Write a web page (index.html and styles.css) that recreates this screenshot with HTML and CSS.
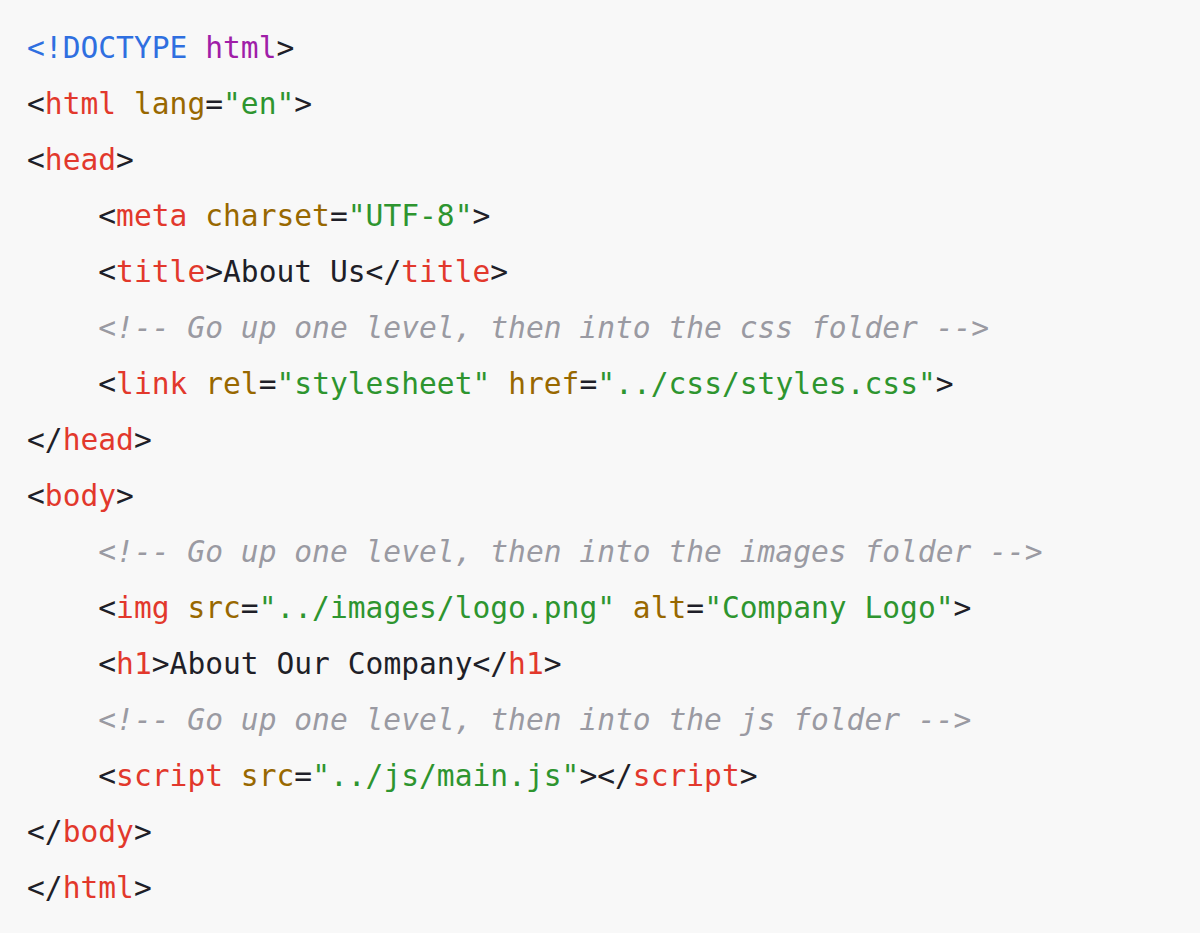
FILE: index.html
```html
<!DOCTYPE html>
<html lang="en">
<head>
<meta charset="UTF-8">
<title>Code</title>
<link rel="stylesheet" href="styles.css">
</head>
<body>
<pre class="code"><code><span class="line"><span class="dt">&lt;!DOCTYPE</span> <span class="dn">html</span><span class="p">&gt;</span></span>
<span class="line"><span class="p">&lt;</span><span class="t">html</span> <span class="a">lang</span><span class="p">=</span><span class="s">"en"</span><span class="p">&gt;</span></span>
<span class="line"><span class="p">&lt;</span><span class="t">head</span><span class="p">&gt;</span></span>
<span class="line">    <span class="p">&lt;</span><span class="t">meta</span> <span class="a">charset</span><span class="p">=</span><span class="s">"UTF-8"</span><span class="p">&gt;</span></span>
<span class="line">    <span class="p">&lt;</span><span class="t">title</span><span class="p">&gt;</span>About Us<span class="p">&lt;/</span><span class="t">title</span><span class="p">&gt;</span></span>
<span class="line">    <span class="c">&lt;!-- Go up one level, then into the css folder --&gt;</span></span>
<span class="line">    <span class="p">&lt;</span><span class="t">link</span> <span class="a">rel</span><span class="p">=</span><span class="s">"stylesheet"</span> <span class="a">href</span><span class="p">=</span><span class="s">"../css/styles.css"</span><span class="p">&gt;</span></span>
<span class="line"><span class="p">&lt;/</span><span class="t">head</span><span class="p">&gt;</span></span>
<span class="line"><span class="p">&lt;</span><span class="t">body</span><span class="p">&gt;</span></span>
<span class="line">    <span class="c">&lt;!-- Go up one level, then into the images folder --&gt;</span></span>
<span class="line">    <span class="p">&lt;</span><span class="t">img</span> <span class="a">src</span><span class="p">=</span><span class="s">"../images/logo.png"</span> <span class="a">alt</span><span class="p">=</span><span class="s">"Company Logo"</span><span class="p">&gt;</span></span>
<span class="line">    <span class="p">&lt;</span><span class="t">h1</span><span class="p">&gt;</span>About Our Company<span class="p">&lt;/</span><span class="t">h1</span><span class="p">&gt;</span></span>
<span class="line">    <span class="c">&lt;!-- Go up one level, then into the js folder --&gt;</span></span>
<span class="line">    <span class="p">&lt;</span><span class="t">script</span> <span class="a">src</span><span class="p">=</span><span class="s">"../js/main.js"</span><span class="p">&gt;&lt;/</span><span class="t">script</span><span class="p">&gt;</span></span>
<span class="line"><span class="p">&lt;/</span><span class="t">body</span><span class="p">&gt;</span></span>
<span class="line"><span class="p">&lt;/</span><span class="t">html</span><span class="p">&gt;</span></span></code></pre>
</body>
</html>
```
FILE: styles.css
```css
html, body {
  margin: 0;
  padding: 0;
  background: #f8f8f8;
}
body {
  width: 1200px;
  height: 933px;
  overflow: hidden;
}
.code {
  margin: 0;
  padding: 20px 0 0 27px;
  font-family: "DejaVu Sans Mono", "Liberation Mono", monospace;
  font-size: 29.6px;
  line-height: 56px;
  color: #1f1f28;
  white-space: pre;
}
.code code {
  font-family: inherit;
}
.line { display: inline; }
.p { color: #1f1f28; }
.dt { color: #2f6fe0; }
.dn { color: #a01ea8; }
.t { color: #e2382c; }
.a { color: #986800; }
.s { color: #2e952f; }
.c { color: #9a9aa2; font-style: italic; }
```
